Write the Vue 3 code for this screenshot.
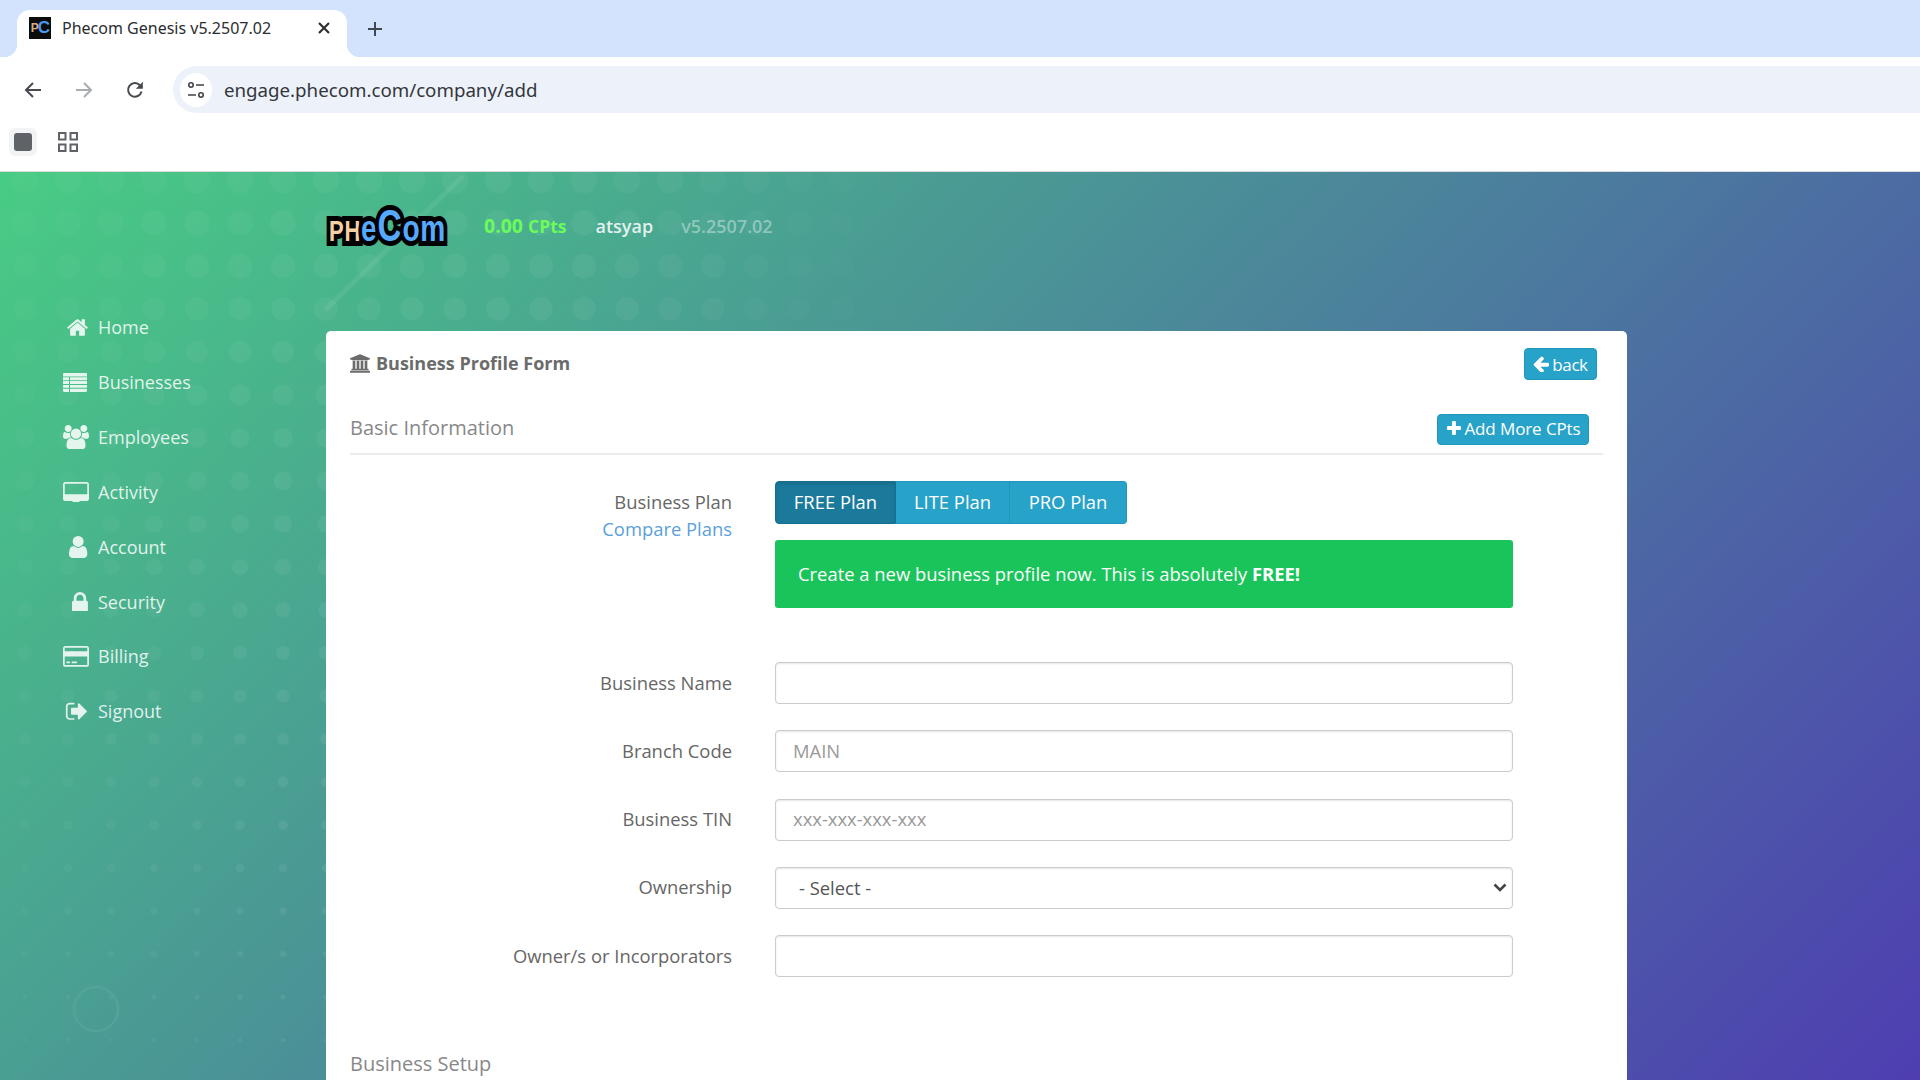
<script setup>
const menu = [
  { label: 'Home', w: 23, vb: '0 0 1792 1792', d: 'M1472 992v480q0 26-19 45t-45 19h-384v-384h-256v384h-384q-26 0-45-19t-19-45v-480q0-1 .5-3t.5-3l575-474 575 474q1 2 1 6zm223-69l-62 74q-8 9-21 11h-3q-13 0-21-7l-692-577-692 577q-12 8-24 7-13-2-21-11l-62-74q-8-10-7-23.5t11-21.5l719-599q32-26 76-26t76 26l244 204v-195q0-14 9-23t23-9h192q14 0 23 9t9 23v408l219 182q10 8 11 21.5t-7 23.5z' },
  { label: 'Businesses', w: 26, vb: '0 0 26 19', d: 'M0 1.2C0 .5.5 0 1.2 0h21.6C23.5 0 24 .5 24 1.2V3.4H0zM0 4.3h6v2.9H0zM7 4.3h17v2.9H7zM0 8.1h6V11H0zM7 8.1h17V11H7zM0 11.9h6v2.9H0zM7 11.9h17v2.9H7zM0 15.7h6V19H1.2C.5 19 0 18.5 0 17.8zM7 15.7h17v2.1c0 .7-.5 1.2-1.2 1.2H7z' },
  { label: 'Employees', w: 26, vb: '0 0 1920 1792', d: 'M593 896q-162 5-265 128h-134q-82 0-138-40.500t-56-118.500q0-353 124-353 6 0 43.500 21t97.500 42.500 119 21.500q67 0 133-23-5 37-5 66 0 139 81 256zm1071 637q0 120-73 189.500t-194 69.500h-874q-121 0-194-69.500t-73-189.500q0-53 3.500-103.500t14-109 26.500-108.500 43-97.500 62-81 85.500-53.500 111.500-20q10 0 43 21.500t73 48 107 48 135 21.500 135-21.500 107-48 73-48 43-21.500q61 0 111.500 20t85.500 53.500 62 81 43 97.500 26.500 108.500 14 109 3.500 103.500zm-1024-1277q0 106-75 181t-181 75-181-75-75-181 75-181 181-75 181 75 75 181zm704 384q0 159-112.500 271.500t-271.500 112.500-271.500-112.500-112.500-271.500 112.500-271.500 271.500-112.500 271.500 112.500 112.500 271.500zm576 225q0 78-56 118.500t-138 40.500h-134q-103-123-265-128 81-117 81-256 0-29-5-66 66 23 133 23 59 0 119-21.500t97.500-42.500 43.500-21q124 0 124 353zm-128-609q0 106-75 181t-181 75-181-75-75-181 75-181 181-75 181 75 75 181z' },
  { label: 'Activity', w: 26, vb: '0 128 1920 1536', d: 'M1792 992v-704q0-13-9.500-22.500t-22.500-9.500h-1600q-13 0-22.500 9.500t-9.500 22.500v704q0 13 9.500 22.500t22.500 9.500h1600q13 0 22.500-9.500t9.500-22.500zm128-704v1088q0 66-47 113t-113 47h-544q0 37 16 77.500t32 71 16 43.500q0 26-19 45t-45 19h-512q-26 0-45-19t-19-45q0-14 16-44t32-70 16-78h-544q-66 0-113-47t-47-113v-1088q0-66 47-113t113-47h1600q66 0 113 47t47 113z' },
  { label: 'Account', w: 20, vb: '256 128 1400 1536', d: 'M1536 1399q0 109-62.500 187t-150.500 78h-854q-88 0-150.500-78t-62.500-187q0-85 8.500-160.500t31.500-152 58.500-131 94-89 134.500-34.500q131 128 313 128t313-128q76 0 134.500 34.500t94 89 58.500 131 31.500 152 8.500 160.500zm-256-887q0 159-112.500 271.500t-271.500 112.500-271.500-112.500-112.500-271.500 112.500-271.500 271.500-112.500 271.500 112.500 112.500 271.500z' },
  { label: 'Security', w: 17, vb: '320 128 1230 1408', d: 'M640 768h512v-192q0-106-75-181t-181-75-181 75-75 181v192zm832 96v576q0 40-28 68t-68 28h-960q-40 0-68-28t-28-68v-576q0-40 28-68t68-28h32v-192q0-184 132-316t316-132 316 132 132 316v192h32q40 0 68 28t28 68z' },
  { label: 'Billing', w: 26, vb: '0 128 1920 1536', d: 'M1760 128q66 0 113 47t47 113v1216q0 66-47 113t-113 47h-1600q-66 0-113-47t-47-113v-1216q0-66 47-113t113-47h1600zm-1600 128q-13 0-22.500 9.500t-9.500 22.500v224h1664v-224q0-13-9.500-22.500t-22.500-9.500h-1600zm1600 1280q13 0 22.500-9.500t9.500-22.500v-608h-1664v608q0 13 9.500 22.500t22.500 9.500h1600zm-1504-128v-128h256v128h-256zm384 0v-128h384v128h-384z' },
  { label: 'Signout', w: 24, vb: '0 128 1792 1536', d: 'M704 1440q0 4 1 20t.5 26.500-3 23.500-10 19.500-20.500 6.500h-320q-119 0-203.500-84.500t-84.500-203.500v-704q0-119 84.500-203.500t203.500-84.500h320q13 0 22.500 9.500t9.500 22.500q0 4 1 20t.5 26.500-3 23.500-10 19.500-20.500 6.500h-320q-66 0-113 47t-47 113v704q0 66 47 113t113 47h312l11.500 1 11.500 3 8 5.500 7 9 2 13.500zm928-544q0 26-19 45l-544 544q-19 19-45 19t-45-19-19-45v-288h-448q-26 0-45-19t-19-45v-384q0-26 19-45t45-19h448v-288q0-26 19-45t45-19 45 19l544 544q19 19 19 45z' }
]

const plans = [
  { label: 'FREE Plan', cls: 'plan free' },
  { label: 'LITE Plan', cls: 'plan lite' },
  { label: 'PRO Plan', cls: 'plan pro' }
]

const dots = []
for (let row = 0; row < 21; row++) {
  const y = 180 + row * 43
  const r = 2 + (1040 - y) * 0.0133
  for (let col = 0; col < 22; col++) {
    const x = 25 + col * 43
    let o = (0.022 + Math.min(x, 330) / 330 * 0.032) * (0.9 + (y - 180) / 860 * 0.5)
    if (x > 600) o *= Math.max(0, 1 - (x - 600) / 330)
    dots.push({ key: `${row}-${col}`, x, y: y - 172, r, o })
  }
}
</script>

<template>
  <div class="screen">
    <header class="browser">
      <div class="tabstrip">
        <div class="tab">
          <div class="favicon"><span class="fav-p">P</span><span class="fav-c">C</span></div>
          <span class="tab-title">Phecom Genesis v5.2507.02</span>
          <svg class="tab-close" width="14" height="14" viewBox="0 0 14 14"><path d="M2 2l10 10M12 2L2 12" fill="none" stroke="#2f3033" stroke-width="2.200" /></svg>
        </div>
        <svg class="new-tab" width="18" height="18" viewBox="0 0 18 18"><path d="M9 2v14M2 9h14" fill="none" stroke="#3f4654" stroke-width="2" /></svg>
      </div>
      <div class="toolbar">
        <div class="nav">
          <svg width="20" height="20" viewBox="0 0 20 20"><path d="M18 10H3M10 3l-7 7 7 7" fill="none" stroke="#474a4e" stroke-width="2" /></svg>
          <svg width="20" height="20" viewBox="0 0 20 20"><path d="M2 10h15M10 3l7 7-7 7" fill="none" stroke="#a9acb0" stroke-width="2" /></svg>
          <svg width="20" height="20" viewBox="0 0 20 20"><path d="M16.500 11.500a6.800 6.800 0 1 1-1.600-6.200L17 7.500" fill="none" stroke="#474a4e" stroke-width="2" /><path d="M17.800 1.800v7h-7z" fill="#474a4e" /></svg>
        </div>
        <div class="address">
          <div class="site-info">
            <svg width="18" height="18" viewBox="0 0 18 18"><g fill="none" stroke="#3f4247" stroke-width="1.600"><circle cx="4" cy="4" r="2.200" /><path d="M9 4h8M1 14h8" /><circle cx="14" cy="14" r="2.200" /></g></svg>
          </div>
          <span class="url">engage.phecom.com/company/add</span>
        </div>
      </div>
      <div class="bookmarks">
        <div class="bm-button"><span class="bm-square"></span></div>
        <svg class="bm-grid" width="20" height="20" viewBox="0 0 20 20"><g fill="none" stroke="#5f6368" stroke-width="2"><rect x="1" y="1" width="6.500" height="6.500" /><rect x="12.500" y="1" width="6.500" height="6.500" /><rect x="1" y="12.500" width="6.500" height="6.500" /><rect x="12.500" y="12.500" width="6.500" height="6.500" /></g></svg>
      </div>
    </header>

    <div class="page">
      <svg class="decor" width="1920" height="908" viewBox="0 0 1920 908">
        <circle v-for="dot in dots" :key="dot.key" :cx="dot.x" :cy="dot.y" :r="dot.r" fill="#fff" :fill-opacity="dot.o" />
        <path d="M463 4L325 138" stroke="#fff" stroke-opacity=".07" stroke-width="5" />
        <circle cx="96" cy="837" r="22" fill="none" stroke="#fff" stroke-opacity=".05" stroke-width="3" />
      </svg>

      <nav class="sidebar">
        <a v-for="item in menu" :key="item.label" class="menu-item">
          <span class="menu-icon">
            <svg :width="item.w" :viewBox="item.vb"><path :d="item.d" fill="currentColor" /></svg>
          </span>
          <span>{{ item.label }}</span>
        </a>
      </nav>

      <main class="main">
        <div class="topbar">
          <div class="logo"><span class="lg-ph">PH</span><span class="lg-e">e</span><span class="lg-c">C</span><span class="lg-om">om</span></div>
          <span class="points">0.00 <small>CPts</small></span>
          <span class="user">atsyap</span>
          <span class="version">v5.2507.02</span>
        </div>

        <section class="card">
          <div class="card-head">
            <h1 class="card-title">
              <svg width="20" height="19" viewBox="0 0 1920 1792"><path fill="currentColor" d="M960 0l960 384v128h-128q0 26-20.500 45t-48.500 19h-1526q-28 0-48.500-19t-20.500-45h-128v-128zm-704 640h256v768h128v-768h256v768h128v-768h256v768h128v-768h256v768h59q28 0 48.500 19t20.500 45v64h-1664v-64q0-26 20.500-45t48.500-19h59v-768zm1595 960q28 0 48.500 19t20.500 45v128h-1920v-128q0-26 20.500-45t48.500-19h1782z" /></svg>
              Business Profile Form
            </h1>
            <button class="btn back-btn">
              <svg width="16" height="16" viewBox="0 64 1536 1536"><path fill="currentColor" d="M1536 832v128q0 53-32.500 90.500t-84.500 37.500h-704l293 294q38 36 38 90t-38 90l-75 76q-37 37-90 37-52 0-91-37l-651-652q-37-37-37-90 0-52 37-91l651-650q38-38 91-38 52 0 90 38l75 74q38 38 38 91t-38 91l-293 293h704q52 0 84.500 37.500t32.500 90.500z" /></svg>
              back
            </button>
          </div>

          <div class="section-head">
            <h2 class="section-title basic">Basic Information</h2>
            <button class="btn add-btn">
              <svg width="16" height="16" viewBox="0 128 1600 1600"><path fill="currentColor" d="M1600 736v192q0 40-28 68t-68 28h-416v416q0 40-28 68t-68 28h-192q-40 0-68-28t-28-68v-416h-416q-40 0-68-28t-28-68v-192q0-40 28-68t68-28h416v-416q0-40 28-68t68-28h192q40 0 68 28t28 68v416h416q40 0 68 28t28 68z" /></svg>
              Add More CPts
            </button>
          </div>

          <div class="plan-row">
            <div class="plan-label">
              <div>Business Plan</div>
              <a class="compare">Compare Plans</a>
            </div>
            <div>
              <div class="plan-group">
                <button v-for="p in plans" :key="p.label" :class="p.cls">{{ p.label }}</button>
              </div>
              <div class="alert">Create a new business profile now. This is absolutely&nbsp;<b>FREE!</b></div>
            </div>
          </div>

          <div class="fields">
            <label class="field"><span class="field-label">Business Name</span><input class="control" type="text" /></label>
            <label class="field"><span class="field-label">Branch Code</span><input class="control" type="text" placeholder="MAIN" /></label>
            <label class="field"><span class="field-label">Business TIN</span><input class="control" type="text" placeholder="xxx-xxx-xxx-xxx" /></label>
            <label class="field"><span class="field-label">Ownership</span><select class="control select"><option>- Select -</option></select></label>
            <label class="field"><span class="field-label">Owner/s or Incorporators</span><input class="control" type="text" /></label>
          </div>

          <h2 class="section-title setup">Business Setup</h2>
        </section>
      </main>
    </div>
  </div>
</template>

<style>
html, body { margin: 0; height: 100%; overflow: hidden; background: #fff; }
</style>

<style scoped>
.screen { width: 1920px; height: 1080px; display: flex; flex-direction: column; overflow: hidden; font-family: "Open Sans", "Noto Sans", sans-serif; }
.browser { background: #fff; }
.tabstrip { height: 57px; background: #d3e3fd; display: flex; align-items: flex-end; box-sizing: border-box; padding-left: 17px; }
.tab { position: relative; width: 330px; height: 47px; background: #fff; border-radius: 13px 13px 0 0; display: flex; align-items: center; box-sizing: border-box; padding: 0 0 11px 12px; }
.tab::before, .tab::after { content: ""; position: absolute; bottom: 0; width: 13px; height: 13px; }
.tab::before { left: -13px; background: radial-gradient(circle at 0 0, transparent 13px, #fff 13.500px); }
.tab::after { right: -13px; background: radial-gradient(circle at 100% 0, transparent 13px, #fff 13.500px); }
.favicon { width: 22px; height: 22px; background: #0c0c0c; display: flex; align-items: center; justify-content: center; font: 700 17px "Liberation Sans", sans-serif; flex: none; letter-spacing: -1px; }
.fav-p { color: #d9ab80; font-size: 12px; }
.fav-c { color: #4a9bf0; }
.tab-title { margin-left: 11px; font-size: 16px; color: #2b2d30; white-space: nowrap; font-family: "Noto Sans", sans-serif; }
.tab-close { margin-left: auto; margin-right: 16px; }
.new-tab { margin: 0 0 19px 19px; }
.toolbar { height: 57px; display: flex; align-items: center; box-sizing: border-box; padding: 8px 0 0 23px; }
.nav { display: flex; gap: 31px; width: 150px; flex: none; }
.address { flex: 1; margin-right: -30px; height: 47px; background: #edf2fa; border-radius: 24px 0 0 24px; display: flex; align-items: center; box-sizing: border-box; padding-left: 7px; }
.site-info { width: 32px; height: 34px; border-radius: 50%; background: #fff; display: flex; align-items: center; justify-content: center; flex: none; }
.url { margin-left: 12px; font-size: 18.700px; color: #33363a; font-family: "Noto Sans", sans-serif; }
.bookmarks { height: 58px; display: flex; align-items: center; box-sizing: border-box; padding: 0 0 2px 9px; border-bottom: 1px solid #dadce0; }
.bm-button { width: 28px; height: 28px; border-radius: 6px; background: #f1f3f4; display: flex; align-items: center; justify-content: center; }
.bm-square { width: 18px; height: 18px; border-radius: 3px; background: #5f6368; }
.bm-grid { margin-left: 21px; }

.page { position: relative; flex: 1; min-height: 0; display: flex; overflow: hidden; background: linear-gradient(135deg, #48cc84, #4e3eb1); }
.decor { position: absolute; left: 0; top: 0; pointer-events: none; }
.sidebar { position: relative; width: 326px; flex: none; box-sizing: border-box; padding-top: 128px; }
.menu-item { display: flex; align-items: center; height: 54.850px; padding-left: 63px; font-size: 18px; color: rgba(255, 255, 255, .85); }
.menu-icon { width: 26px; margin-right: 9px; display: flex; justify-content: flex-end; }
.menu-icon svg { display: block; }
.main { position: relative; width: 1301px; flex: none; }
.topbar { height: 159px; box-sizing: border-box; padding-top: 33px; display: flex; align-items: flex-start; font-size: 18px; }
.topbar > span { line-height: 42px; }
.logo { width: 123px; height: 42px; display: flex; align-items: baseline; justify-content: center; font-family: "Liberation Sans", sans-serif; font-weight: 700; line-height: 42px; letter-spacing: 1px; color: #55aaff; -webkit-text-stroke: 10px #000; paint-order: stroke fill; transform: scaleX(.76); transform-origin: center; white-space: nowrap; }
.lg-ph { font-size: 29px; color: #f6d0a4; }
.lg-e, .lg-om { font-size: 37px; }
.lg-c { font-size: 44px; }
.points { margin-left: 35px; color: #6bfb5a; font-weight: 700; font-size: 19.500px; }
.points small { font-size: 17.500px; }
.user { margin-left: 29px; color: rgba(255, 255, 255, .85); font-weight: 600; }
.version { margin-left: 28px; color: rgba(255, 255, 255, .4); font-weight: 600; }

.card { background: #fff; border-radius: 5px 5px 0 0; box-sizing: border-box; padding: 17px 24px 40px; color: #666; }
.card-head { display: flex; justify-content: space-between; align-items: center; padding-right: 6px; }
.card-title { margin: -2px 0 0; font-size: 18px; font-weight: 700; display: flex; align-items: center; gap: 6px; color: #6b6b6b; }
.btn { border: 1px solid #2196bd; background: #27a2c9; color: #fff; border-radius: 4px; font: 400 17px "Open Sans", sans-serif; display: flex; align-items: center; justify-content: center; padding: 0; box-sizing: border-box; }
.back-btn { width: 73px; height: 32px; gap: 3px; letter-spacing: -.4px; }
.section-head { display: flex; justify-content: space-between; align-items: center; margin-top: 34px; padding: 0 14px 8px 0; border-bottom: 2px solid #ececec; }
.section-title { margin: 0; font-size: 20px; font-weight: 400; color: #888; line-height: 28px; }
.basic { margin-bottom: 3px; }
.add-btn { width: 152px; height: 31px; gap: 3px; letter-spacing: -.1px; padding-bottom: 2px; }
.plan-row { display: grid; grid-template-columns: 382px 738px; column-gap: 43px; margin-top: 26px; }
.plan-label { text-align: right; font-size: 18.400px; line-height: 27px; padding-top: 7px; }
.compare { color: #5b9fd9; }
.plan-group { display: flex; }
.plan { height: 43px; border: 1px solid #2196bd; background: #27a2c9; color: #fff; font: 400 18.400px "Open Sans", sans-serif; padding: 0 0 2px; border-left-width: 0; }
.free { width: 121px; background: #1b7a9c; border: 1px solid #186e8e; border-radius: 4px 0 0 4px; box-shadow: inset 0 2px 4px rgba(0, 0, 0, .12); }
.lite { width: 114px; }
.pro { width: 117px; border-radius: 0 4px 4px 0; }
.alert { margin-top: 16px; height: 68px; display: flex; align-items: center; box-sizing: border-box; padding: 0 0 2px 23px; background: #19c45a; border-radius: 3px; color: #fff; font-size: 18.400px; }
.fields { margin-top: 54px; display: flex; flex-direction: column; gap: 26.300px; }
.field { display: grid; grid-template-columns: 382px 738px; column-gap: 43px; align-items: center; }
.field-label { text-align: right; font-size: 18.400px; margin-top: -2px; }
.control { height: 42px; box-sizing: border-box; border: 1px solid #ccc; border-radius: 4px; padding: 0 17px 2px; background: #fff; color: #555; font: 400 18.400px "Open Sans", sans-serif; box-shadow: inset 0 1px 2px rgba(0, 0, 0, .1); outline: none; }
.control::placeholder { color: #999; }
.select { appearance: none; padding: 0 23px; background: #fff url("data:image/svg+xml,%3Csvg xmlns='http://www.w3.org/2000/svg' width='14' height='9' viewBox='0 0 14 9'%3E%3Cpath d='M1.500 1.500L7 7l5.500-5.500' fill='none' stroke='%23444' stroke-width='2.600'/%3E%3C/svg%3E") no-repeat right 5px center; }
.setup { margin-top: 73px; }
</style>
